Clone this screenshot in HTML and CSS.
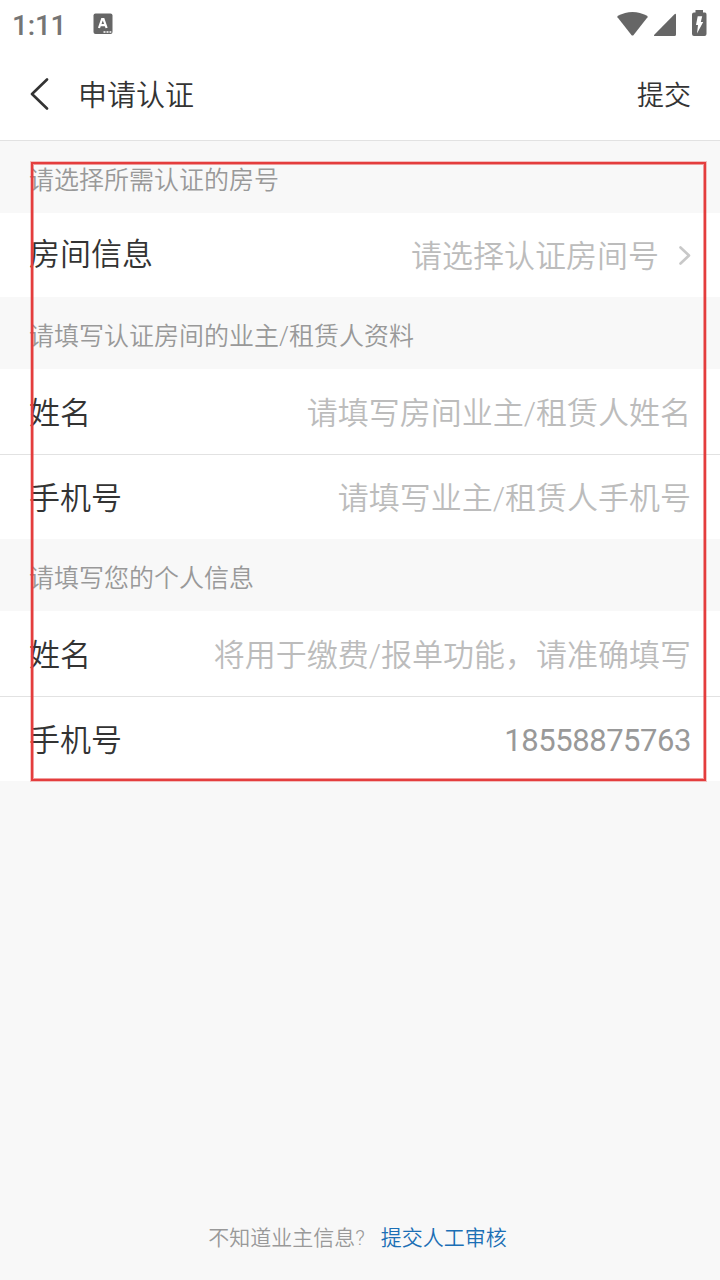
FILE: index.html
```html
<!DOCTYPE html>
<html lang="zh-CN">
<head>
    <meta charset="UTF-8">
    <meta name="viewport" content="width=device-width, initial-scale=1.0">
    <title>申请认证</title>
    <link rel="stylesheet" href="styles.css">
</head>
<body>
    <div class="status-bar">
        <span class="time">1:11</span>
        <svg class="keyboard-icon" width="20" height="22" viewBox="0 0 20 22">
            <rect x="0.5" y="0.5" width="19" height="20.5" rx="2" fill="#666"/>
            <path d="M6 15L9.1 6.2H10.5L13.6 15M7.2 12.2H12.4" fill="none" stroke="#fff" stroke-width="2.2"/>
            <path d="M10.5 19h2M13.5 19h2M16.5 19h1.8" stroke="#fff" stroke-width="1.6"/>
        </svg>
        <div class="status-icons">
            <svg width="32" height="26" viewBox="0 0 32 26">
                <path d="M0.5 7.2Q0 6.4 0.9 5.8Q8 2 15.5 2T30.1 5.8Q31 6.4 30.5 7.2L16.6 25Q15.5 26 14.4 25Z" fill="#666"/>
            </svg>
            <svg width="23" height="26" viewBox="0 0 23 26">
                <path d="M20.5 4.3Q22 3 22 5V24.5Q22 26 20.5 26H1Q-0.8 26 0.5 24.5Z" fill="#666"/>
            </svg>
            <svg class="battery" width="15" height="26" viewBox="0 0 15 26">
                <path d="M3.5 0H11V2.5H13Q14.5 2.5 14.5 4.5V24Q14.5 26 12.5 26H2Q0 26 0 24V4.5Q0 2.5 2 2.5H3.5Z" fill="#666"/>
                <path d="M5.7 6.3H10.2L8.8 12H11.2L5 23.5L6 15H4Z" fill="#fff"/>
            </svg>
        </div>
    </div>

    <header class="nav-bar">
        <svg class="back" width="20" height="32" viewBox="0 0 20 32">
            <path d="M17 1.5L2 16L17 30.5" fill="none" stroke="#333" stroke-width="2.6" stroke-linecap="round" stroke-linejoin="round"/>
        </svg>
        <h1 class="title">申请认证</h1>
        <span class="submit">提交</span>
    </header>

    <main class="form">
        <p class="hint">请选择所需认证的房号</p>
        <div class="group">
            <div class="row">
                <span class="label room-label">房间信息</span>
                <span class="placeholder">请选择认证房间号</span>
                <svg class="arrow" width="12" height="20" viewBox="0 0 12 20">
                    <path d="M1.5 1.5L10 9.5L1.5 17.5" fill="none" stroke="#c8c8c8" stroke-width="2.6" stroke-linecap="round" stroke-linejoin="round"/>
                </svg>
            </div>
        </div>

        <p class="hint">请填写认证房间的业主/租赁人资料</p>
        <div class="group">
            <div class="row">
                <span class="label">姓名</span>
                <span class="placeholder">请填写房间业主/租赁人姓名</span>
            </div>
            <div class="row">
                <span class="label">手机号</span>
                <span class="placeholder">请填写业主/租赁人手机号</span>
            </div>
        </div>

        <p class="hint">请填写您的个人信息</p>
        <div class="group">
            <div class="row">
                <span class="label">姓名</span>
                <span class="placeholder">将用于缴费/报单功能，请准确填写</span>
            </div>
            <div class="row">
                <span class="label">手机号</span>
                <span class="value">18558875763</span>
            </div>
        </div>
        <div class="highlight"></div>
    </main>

    <footer class="footer">
        <span>不知道业主信息?</span>
        <a class="link">提交人工审核</a>
    </footer>
</body>
</html>
```
FILE: styles.css
```css
:root {
    --background: #f8f8f8;
    --text: #333;
    --text-light: #999;
    --placeholder: #bcbcbc;
    --border: #e2e2e2;
    --link: #1b6fb5;
    --red: #e43d3d;
}

* {
    margin: 0;
    padding: 0;
    box-sizing: border-box;
}

body {
    display: flex;
    flex-direction: column;
    height: 1280px;
    font-family: Roboto, 'Noto Sans CJK SC DemiLight', 'Noto Sans CJK SC', sans-serif;
    font-weight: 300;
    background-color: var(--background);
    color: var(--text);
}

svg {
    display: block;
    flex-shrink: 0;
}

.status-bar {
    display: flex;
    align-items: center;
    height: 50px;
    padding: 0 13px 4px 12px;
    background: white;
}

.time {
    width: 81px;
    font-size: 28px;
    font-weight: 500;
    line-height: 34px;
    letter-spacing: -0.2px;
    color: #757575;
    padding-top: 6px;
}

.keyboard-icon {
    margin-top: 2px;
}

.status-icons {
    display: flex;
    gap: 5px;
    margin-left: auto;
}

.battery {
    margin-left: 10px;
}

.nav-bar {
    display: flex;
    align-items: center;
    height: 91px;
    padding: 0 29px 2px 30px;
    background: white;
    border-bottom: 1px solid var(--border);
}

.title {
    margin-left: 28px;
    font-size: 29px;
    font-weight: 300;
    padding-bottom: 3px;
}

.submit {
    margin-left: auto;
    font-size: 27px;
    padding-bottom: 1px;
}

.form {
    position: relative;
}

.hint {
    height: 72px;
    padding: 7px 29px 0;
    font-size: 25px;
    line-height: 66px;
    color: var(--text-light);
}

.group {
    background: white;
}

.row {
    display: flex;
    align-items: center;
    justify-content: space-between;
    height: 85px;
    padding: 4px 29px 0;
    font-size: 31px;
    line-height: 46px;
}

.row:only-child {
    height: 84px;
}

.row + .row {
    padding-top: 3px;
    border-top: 1px solid var(--border);
}

.placeholder {
    color: var(--placeholder);
}

.room-label {
    padding-bottom: 4px;
}

.room-label + .placeholder {
    margin-left: auto;
}

.value {
    font-weight: 400;
    letter-spacing: -0.45px;
    color: var(--text-light);
}

.arrow {
    margin: 0 0 3px 20px;
}

/* red frame over the form fields */
.highlight {
    position: absolute;
    top: 21px;
    left: 31px;
    width: 675px;
    height: 619px;
    border: 2px solid var(--red);
    box-shadow: 0 0 0 1px rgba(228, 61, 61, 0.3), inset 0 0 0 1px rgba(228, 61, 61, 0.5);
}

.footer {
    display: flex;
    justify-content: center;
    gap: 16px;
    margin-top: auto;
    padding: 0 5px 26px 0;
    font-size: 21px;
    line-height: 32px;
    color: var(--text-light);
}

.link {
    color: var(--link);
}
```
